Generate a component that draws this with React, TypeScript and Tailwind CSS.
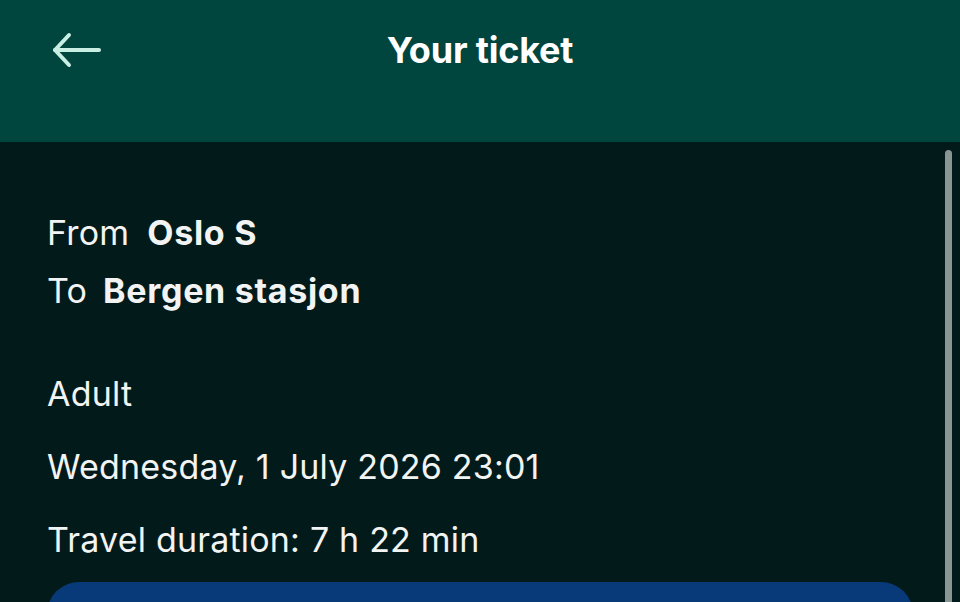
import React from "react";

export default function App() {
  return (
    <div className="relative w-[960px] h-[602px] overflow-hidden bg-[#031a1b] text-[#f2f4f3]" style={{ fontFamily: "Inter, Lato, sans-serif" }}>
      <header className="h-[142px] bg-[#00453e] flex items-start">
        <div className="relative flex-1 h-[99px] flex items-center justify-center">
          <button className="absolute left-[51px] top-[32px] w-[52px] h-[36px] flex items-center justify-center">
            <svg width="50" height="36" viewBox="0 0 50 36" fill="none" stroke="#c9efe4" strokeWidth="4" strokeLinecap="round" strokeLinejoin="round">
              <path d="M3 18 H47" />
              <path d="M17 3 L3 18 L17 33" />
            </svg>
          </button>
          <h1 className="text-[36px] font-bold tracking-[-0.2px] text-white leading-none">Your ticket</h1>
        </div>
      </header>
      <main className="pl-[47px] pr-[47px] pt-[62px]">
        <div className="text-[34px] leading-[58px] tracking-[0.2px]">
          <div className="flex gap-[18px]">
            <span>From</span>
            <span className="font-bold tracking-[0.7px]">Oslo S</span>
          </div>
          <div className="flex gap-[16px]">
            <span>To</span>
            <span className="font-bold tracking-[0.7px]">Bergen stasjon</span>
          </div>
        </div>
        <div className="mt-[37px] text-[34px] leading-[73px] tracking-[0.2px]">
          <div>Adult</div>
          <div>Wednesday, 1 July 2026 23:01</div>
          <div>Travel duration: 7 h 22 min</div>
        </div>
        <div className="mt-[6px] h-[120px] rounded-[32px] bg-[#083a7a]" />
      </main>
      <div className="absolute left-[945px] top-[150px] w-[7px] h-[470px] rounded-full bg-[#8a9694]" />
    </div>
  );
}
